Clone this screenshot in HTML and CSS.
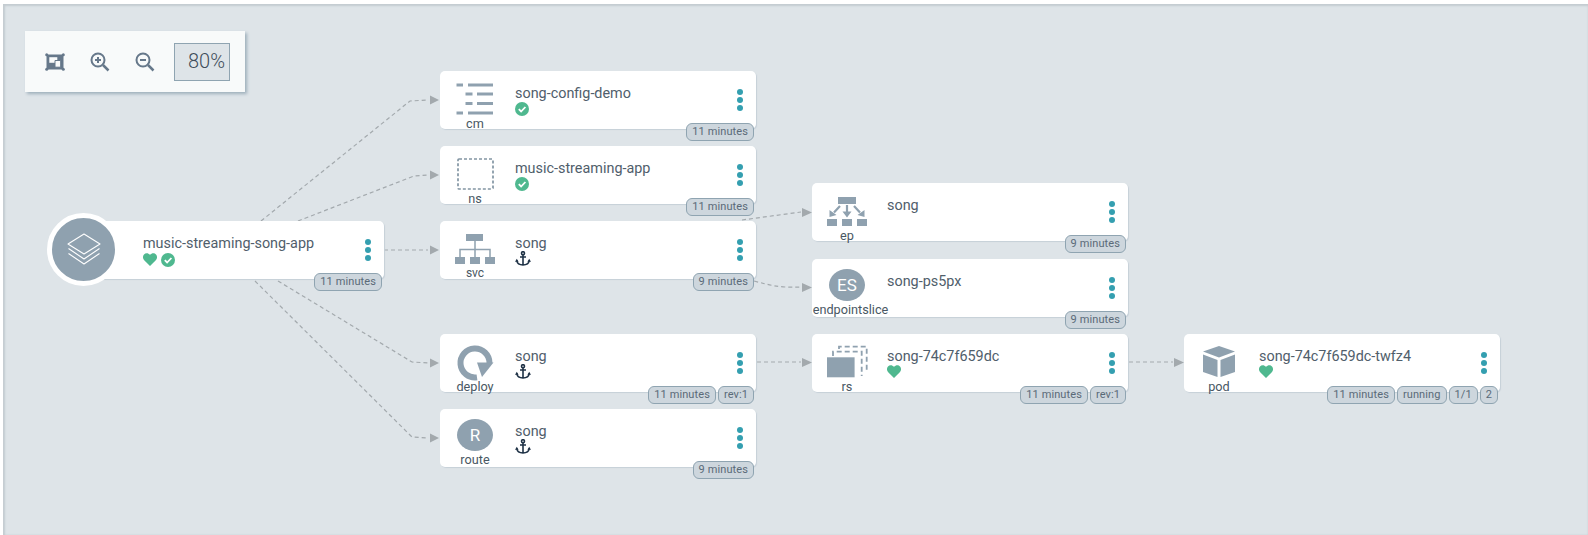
FILE: index.html
```html
<!DOCTYPE html>
<html lang="en">
<head>
	<meta charset="UTF-8">
	<title>music-streaming-song-app</title>
	<link rel="stylesheet" href="styles.css">
</head>
<body>
<svg class="defs" width="0" height="0">
	<symbol id="heart" viewBox="0 0 14 13">
		<path d="M7 13 1.200 7.200C-.4 5.600-.4 3 1 1.400 2.500-.3 5.200-.4 7 1.800 8.800-.4 11.500-.3 13 1.400 14.400 3 14.400 5.600 12.800 7.200Z"/>
	</symbol>
	<symbol id="check" viewBox="0 0 14 14">
		<circle cx="7" cy="7" r="7"/>
		<path class="tick" d="M3.800 7.200 6.100 9.500 10.400 5"/>
	</symbol>
	<symbol id="anchor" viewBox="0 0 16 15">
		<g class="anchor-lines">
			<circle cx="8" cy="2.200" r="1.500"/>
			<path d="M8 3.700V14M5 6h6M1.800 9.500C2.200 12.500 5 14 8 14s5.800-1.500 6.200-4.500"/>
		</g>
		<path class="anchor-barb" d="M0 10.800 1.800 7.800l1.800 3ZM12.400 10.800 14.200 7.800l1.800 3Z"/>
	</symbol>
</svg>

<div class="page">
	<div class="canvas"></div>

	<!-- edges -->
	<svg class="edges" width="1588" height="535">
		<g class="edge">
			<path d="M261 221 410 101 428 100"/>
			<path d="M298 221 414 176 428 175"/>
			<path d="M384 250H428"/>
			<path d="M278 281 412 362 428 363"/>
			<path d="M255 281 412 437 428 438"/>
			<path d="M742 220 801 212"/>
			<path d="M754 281C770 285 778 288 801 287"/>
			<path d="M757 362H801"/>
			<path d="M1129 362H1173"/>
		</g>
		<g class="arrow">
			<path d="M430 95.500 439 100 430 104.500Z"/>
			<path d="M430 170.500 439 175 430 179.500Z"/>
			<path d="M430 245.500 439 250 430 254.500Z"/>
			<path d="M430 358.500 439 363 430 367.500Z"/>
			<path d="M430 433.500 439 438 430 442.500Z"/>
			<path d="M802 208 812 212.500 802 217Z"/>
			<path d="M802 283 812 287.500 802 292Z"/>
			<path d="M802 358 812 362.500 802 367Z"/>
			<path d="M1174 358 1184 362.500 1174 367Z"/>
		</g>
	</svg>

	<!-- zoom toolbar -->
	<div class="toolbar">
		<svg class="tool" viewBox="0 0 20 18" width="20" height="18">
			<path class="tool-fill" d="M1.500 1.500H18.500V16.500H1.500Z"/>
			<path class="tool-hole" d="M4.300 4.200H12.300V9.800H4.300Z"/>
			<path class="tool-hole tool-front" d="M10 7.500H15.700V14.200H10Z"/>
			<circle class="tool-fill" cx="1.700" cy="1.700" r="1.500"/><circle class="tool-fill" cx="18.300" cy="1.700" r="1.500"/>
			<circle class="tool-fill" cx="1.700" cy="16.300" r="1.500"/><circle class="tool-fill" cx="18.300" cy="16.300" r="1.500"/>
		</svg>
		<svg class="tool" viewBox="0 0 20 20" width="20" height="20">
			<g class="tool-line">
				<circle cx="8" cy="8" r="6.500"/>
				<path class="tool-handle" d="M13 13 18.500 18.500"/>
				<path d="M5 8H11M8 5V11"/>
			</g>
		</svg>
		<svg class="tool" viewBox="0 0 20 20" width="20" height="20">
			<g class="tool-line">
				<circle cx="8" cy="8" r="6.500"/>
				<path class="tool-handle" d="M13 13 18.500 18.500"/>
				<path d="M5 8H11"/>
			</g>
		</svg>
		<div class="zoom-value">80%</div>
	</div>

	<!-- root -->
	<div class="node node-root">
		<div class="root-circle">
			<svg viewBox="0 0 36 34" width="36" height="34">
				<g class="layers">
					<path d="M18 1 34 11 18 21 2 11Z"/>
					<path d="M2.500 15.500 18 26 33.500 15.500"/>
					<path d="M2.500 20.500 18 31 33.500 20.500"/>
				</g>
			</svg>
		</div>
		<div class="node-body">
			<div class="node-title">music-streaming-song-app</div>
			<div class="node-status">
				<svg class="ic-green" width="14" height="13"><use href="#heart"/></svg>
				<svg class="ic-green" width="14" height="14"><use href="#check"/></svg>
			</div>
		</div>
		<div class="dots"><i></i><i></i><i></i></div>
		<div class="pills"><span>11 minutes</span></div>
	</div>

	<!-- second column -->
	<div class="node col-2 row-1">
		<div class="node-kind">
			<svg class="kind-icon" viewBox="0 0 44 36">
				<path d="M3.500 2.500h6.500v3H3.500ZM15 2.500h25v3H15ZM12.500 11.500h7v3h-7ZM24 11.500h16v3H24ZM12.500 21h7v3h-7ZM24 21h16v3H24ZM3.500 30.500h6.500v3H3.500ZM15 30.500h25v3H15Z"/>
			</svg>
			<span>cm</span>
		</div>
		<div class="node-body">
			<div class="node-title">song-config-demo</div>
			<div class="node-status"><svg class="ic-green" width="14" height="14"><use href="#check"/></svg></div>
		</div>
		<div class="dots"><i></i><i></i><i></i></div>
		<div class="pills"><span>11 minutes</span></div>
	</div>

	<div class="node col-2 row-2">
		<div class="node-kind">
			<svg class="kind-icon" viewBox="0 0 44 36">
				<rect class="dashed-box" x="5" y="3" width="35" height="30" rx="1"/>
			</svg>
			<span>ns</span>
		</div>
		<div class="node-body">
			<div class="node-title">music-streaming-app</div>
			<div class="node-status"><svg class="ic-green" width="14" height="14"><use href="#check"/></svg></div>
		</div>
		<div class="dots"><i></i><i></i><i></i></div>
		<div class="pills"><span>11 minutes</span></div>
	</div>

	<div class="node col-2 row-3">
		<div class="node-kind">
			<svg class="kind-icon" viewBox="0 0 44 36">
				<path d="M13 3h17v7H13ZM2 26h10v7H2ZM17 26h10v7H17ZM32 26h10v7H32Z"/>
				<path class="kind-line" d="M22 10v16M7 26v-7.500h30V26"/>
			</svg>
			<span class="kind-small">svc</span>
		</div>
		<div class="node-body">
			<div class="node-title">song</div>
			<div class="node-status"><svg class="ic-anchor" width="16" height="15"><use href="#anchor"/></svg></div>
		</div>
		<div class="dots"><i></i><i></i><i></i></div>
		<div class="pills"><span>9 minutes</span></div>
	</div>

	<div class="node col-2 row-4">
		<div class="node-kind">
			<svg class="kind-icon" viewBox="0 0 44 36">
				<path class="kind-arc" d="M36.500 19A14.500 14.500 0 1 0 24 33.400"/>
				<path d="M24 18.500H40.500L29 33Z"/>
			</svg>
			<span>deploy</span>
		</div>
		<div class="node-body">
			<div class="node-title">song</div>
			<div class="node-status"><svg class="ic-anchor" width="16" height="15"><use href="#anchor"/></svg></div>
		</div>
		<div class="dots"><i></i><i></i><i></i></div>
		<div class="pills"><span>11 minutes</span><span>rev:1</span></div>
	</div>

	<div class="node col-2 row-5">
		<div class="node-kind">
			<div class="kind-circle">R</div>
			<span>route</span>
		</div>
		<div class="node-body">
			<div class="node-title">song</div>
			<div class="node-status"><svg class="ic-anchor" width="16" height="15"><use href="#anchor"/></svg></div>
		</div>
		<div class="dots"><i></i><i></i><i></i></div>
		<div class="pills"><span>9 minutes</span></div>
	</div>

	<!-- third column -->
	<div class="node col-3 row-ep">
		<div class="node-kind">
			<svg class="kind-icon" viewBox="0 0 44 36">
				<path d="M13 4h18v7H13ZM2 26h10v7H2ZM17 26h10v7H17ZM32 26h10v7H32Z"/>
				<path class="kind-line kind-shaft" d="M22 12v8M15 13 9 19.500M29 13 35 19.500"/>
				<path d="M17.500 18.500h9L22 24.500ZM4.500 17l7 5-7 2ZM39.500 17l-7 5 7 2Z"/>
			</svg>
			<span>ep</span>
		</div>
		<div class="node-body">
			<div class="node-title">song</div>
		</div>
		<div class="dots"><i></i><i></i><i></i></div>
		<div class="pills"><span>9 minutes</span></div>
	</div>

	<div class="node col-3 row-es">
		<div class="node-kind">
			<div class="kind-circle">ES</div>
			<span class="kind-long">endpointslice</span>
		</div>
		<div class="node-body">
			<div class="node-title">song-ps5px</div>
		</div>
		<div class="dots"><i></i><i></i><i></i></div>
		<div class="pills"><span>9 minutes</span></div>
	</div>

	<div class="node col-3 row-4">
		<div class="node-kind">
			<svg class="kind-icon" viewBox="0 0 44 36">
				<path class="kind-dash" d="M14 5V2.700H41.700V27"/>
				<path class="kind-dash" d="M8 12V7.700H36.700V32"/>
				<path d="M2 13.300H29.600V33.300H2Z"/>
			</svg>
			<span>rs</span>
		</div>
		<div class="node-body">
			<div class="node-title">song-74c7f659dc</div>
			<div class="node-status"><svg class="ic-green" width="14" height="13"><use href="#heart"/></svg></div>
		</div>
		<div class="dots"><i></i><i></i><i></i></div>
		<div class="pills"><span>11 minutes</span><span>rev:1</span></div>
	</div>

	<!-- pod -->
	<div class="node col-4 row-4">
		<div class="node-kind">
			<svg class="kind-icon" viewBox="0 0 44 36">
				<path d="M22 2 38 7.500 22 13.500 6 7.500ZM6 10.500 20.500 16V33L6 28ZM38 10.500 23.500 16V33L38 28Z"/>
			</svg>
			<span>pod</span>
		</div>
		<div class="node-body">
			<div class="node-title">song-74c7f659dc-twfz4</div>
			<div class="node-status"><svg class="ic-green" width="14" height="13"><use href="#heart"/></svg></div>
		</div>
		<div class="dots"><i></i><i></i><i></i></div>
		<div class="pills"><span>11 minutes</span><span>running</span><span>1/1</span><span>2</span></div>
	</div>
</div>
</body>
</html>
```

FILE: styles.css
```css
* {
	margin: 0;
	padding: 0;
	box-sizing: border-box;
}
body {
	background: #fff;
	overflow: hidden;
	font-family: Roboto, "Liberation Sans", sans-serif;
}
.defs {
	position: absolute;
}
.page {
	position: relative;
	width: 1588px;
	height: 535px;
	overflow: hidden;
}
.canvas {
	margin: 4px 0 0 3px;
	height: 531px;
	background: #dee4e8;
	box-shadow: inset 0 2px 2px #c4ccd1, inset 2px 0 2px #c4ccd1;
}

/* edges */
.edges {
	position: absolute;
	top: 0;
	left: 0;
}
.edge path {
	fill: none;
	stroke: #a3a9ad;
	stroke-width: 1.200;
	stroke-dasharray: 4 3;
}
.arrow path {
	fill: #a3a9ad;
}

/* toolbar */
.toolbar {
	position: absolute;
	left: 25px;
	top: 31px;
	width: 220px;
	height: 61px;
	display: flex;
	align-items: center;
	background: #f8fafa;
	box-shadow: 2px 2px 3px #9fb0bc;
}
.tool {
	flex: none;
	margin-left: 20px;
	margin-right: 5px;
}
.tool-fill {
	fill: #66788a;
}
.tool-hole {
	fill: #f8fafa;
}
.tool-front {
	stroke: #66788a;
	stroke-width: 1;
}
.tool-line {
	fill: none;
	stroke: #66788a;
	stroke-width: 2;
}
.tool-handle {
	stroke-width: 2.500;
}
.zoom-value {
	margin-left: 14px;
	width: 56px;
	height: 38px;
	padding-right: 4px;
	border: 1px solid #8fa4b1;
	background: #dee4e8;
	color: #3f4d5a;
	font-size: 20px;
	font-weight: 300;
	line-height: 34px;
	text-align: right;
}

/* nodes */
.node {
	position: absolute;
	display: flex;
	width: 316px;
	height: 58px;
	background: #fff;
	border-radius: 5px;
	box-shadow: 1px 1px 1px #c6d0d8;
}
.col-2 { left: 440px; }
.col-3 { left: 812px; }
.col-4 { left: 1184px; }
.row-1 { top: 71px; }
.row-2 { top: 146px; }
.row-3 { top: 221px; }
.row-4 { top: 334px; }
.row-5 { top: 409px; }
.row-ep { top: 183px; }
.row-es { top: 259px; }

.node-root {
	left: 83px;
	top: 221px;
	width: 301px;
}
.root-circle {
	position: absolute;
	left: -36px;
	top: -8px;
	width: 73px;
	height: 73px;
	display: flex;
	align-items: center;
	justify-content: center;
	border: 5px solid #fff;
	border-radius: 50%;
	background: #8fa1af;
}
.layers path {
	fill: none;
	stroke: #fff;
	stroke-width: 1.100;
	stroke-linejoin: round;
}
.node-root .node-body {
	margin-left: 60px;
}
.node-root .node-status {
	margin-top: -2px;
}

.node-kind {
	flex: none;
	width: 70px;
	padding-top: 10px;
	display: flex;
	flex-direction: column;
	align-items: center;
	color: #495763;
	font-size: 12.700px;
	line-height: 15px;
	white-space: nowrap;
}
.kind-icon {
	display: block;
	width: 44px;
	height: 36px;
	margin-bottom: -1.500px;
	overflow: visible;
	fill: #8fa1af;
}
.kind-small {
	font-size: 12px;
}
.kind-long {
	margin-left: 7px;
}
.kind-line {
	fill: none;
	stroke: #8fa1af;
	stroke-width: 1.500;
}
.kind-shaft {
	stroke-width: 2.200;
}
.kind-arc {
	fill: none;
	stroke: #8fa1af;
	stroke-width: 6;
}
.kind-dash {
	fill: none;
	stroke: #8fa1af;
	stroke-width: 1.800;
	stroke-dasharray: 5 3;
}
.dashed-box {
	fill: none;
	stroke: #8295a3;
	stroke-width: 1.700;
	stroke-dasharray: 3 2;
}
.kind-circle {
	width: 36px;
	height: 36px;
	margin-bottom: 1px;
	display: flex;
	align-items: center;
	justify-content: center;
	border-radius: 50%;
	background: #8fa1af;
	color: #fff;
	font-size: 17px;
}

.node-body {
	flex: 1;
	margin-left: 5px;
	padding-top: 13px;
}
.node-title {
	color: #505e6b;
	font-size: 14.400px;
	line-height: 20px;
}
.node-status {
	display: flex;
	align-items: center;
	gap: 4px;
	height: 15px;
	margin-top: -3px;
}
.ic-green {
	fill: #4fb88f;
}
.tick {
	fill: none;
	stroke: #fff;
	stroke-width: 1.800;
}
.ic-anchor {
	fill: #1f3246;
}
.anchor-lines {
	fill: none;
	stroke: #1f3246;
	stroke-width: 1.600;
}

.dots {
	flex: none;
	width: 32px;
	display: flex;
	flex-direction: column;
	align-items: center;
	justify-content: center;
	gap: 1.700px;
}
.dots i {
	display: block;
	width: 6px;
	height: 6px;
	border-radius: 50%;
	background: #349fb0;
}

.pills {
	position: absolute;
	right: 2px;
	bottom: -12px;
	display: flex;
	gap: 2px;
}
.pills span {
	height: 18px;
	padding: 0 5px;
	border: 1px solid #8fa4b1;
	border-radius: 6px;
	background: #cdd6dd;
	color: #5a6a78;
	font-size: 11px;
	letter-spacing: .1px;
	line-height: 16px;
	white-space: nowrap;
}
```
